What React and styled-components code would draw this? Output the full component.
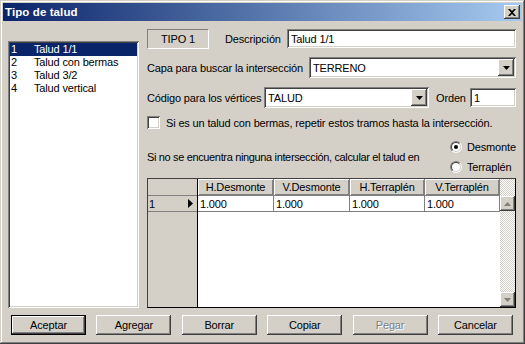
import React from 'react';
import styled, { createGlobalStyle, css } from 'styled-components';

const Global = createGlobalStyle`
  html, body { margin: 0; padding: 0; background: #d4d0c8; }
  body {
    font-family: "Liberation Sans", Arial, sans-serif;
    font-size: 11px;
    letter-spacing: -0.15px;
    color: #000;
  }
  * { box-sizing: border-box; }
`;

const raised = css`
  box-shadow: inset -1px -1px #404040, inset 1px 1px #fff, inset -2px -2px #808080, inset 2px 2px #d4d0c8;
`;
const sunken = css`
  box-shadow: inset 1px 1px #808080, inset -1px -1px #fff, inset 2px 2px #404040, inset -2px -2px #d4d0c8;
`;

const Window = styled.div`
  width: 525px;
  height: 344px;
  padding: 3px;
  background: #d4d0c8;
  box-shadow: inset -1px -1px #404040, inset 1px 1px #d4d0c8, inset -2px -2px #808080, inset 2px 2px #fff;
  display: flex;
  flex-direction: column;
`;

const TitleBar = styled.div`
  height: 18px;
  flex: none;
  display: flex;
  align-items: center;
  justify-content: space-between;
  padding: 0 2px;
  background: linear-gradient(to right, #0a246a, #a6caf0);
  color: #fff;
  font-weight: bold;
  font-size: 11.5px;
  letter-spacing: 0.1px;
`;

const CloseButton = styled.div`
  width: 16px;
  height: 14px;
  background: #d4d0c8;
  ${raised};
  display: flex;
  align-items: center;
  justify-content: center;
`;

const Body = styled.div`
  flex: 1;
  display: flex;
  flex-direction: column;
  padding: 8px 6px 0 5px;
`;

const Main = styled.div`
  display: flex;
  gap: 8px;
  height: 279px;
`;

const ListBox = styled.div`
  margin-top: 12px;
  width: 131px;
  height: 267px;
  background: #fff;
  ${sunken};
  padding: 2px;
`;

const ListItem = styled.div`
  height: 13px;
  line-height: 13px;
  display: grid;
  grid-template-columns: 23px 1fr;
  padding-left: 1px;
  background: ${p => (p.$selected ? '#0a246a' : 'transparent')};
  color: ${p => (p.$selected ? '#fff' : '#000')};
  white-space: nowrap;
`;

const RightPanel = styled.div`
  width: 369px;
  display: flex;
  flex-direction: column;
`;

const Row = styled.div`
  display: flex;
  align-items: center;
  height: ${p => p.$h}px;
  margin-top: ${p => p.$mt || 0}px;
  justify-content: ${p => p.$justify || 'flex-start'};
`;

const TipoBox = styled.div`
  width: 62px;
  height: 20px;
  border: 1px solid;
  border-color: #808080 #fff #fff #808080;
  display: flex;
  align-items: center;
  justify-content: center;
`;

const Label = styled.span`
  white-space: nowrap;
  margin-left: ${p => p.$ml || 0}px;
  letter-spacing: ${p => (p.$tight ? '-0.35px' : 'inherit')};
`;

const TextInput = styled.div`
  width: ${p => p.$w}px;
  height: 19px;
  margin-left: auto;
  align-self: ${p => (p.$top ? 'flex-start' : 'center')};
  background: #fff;
  ${sunken};
  padding: 0 4px;
  display: flex;
  align-items: center;
`;

const ComboBox = styled.div`
  width: ${p => p.$w}px;
  height: 21px;
  margin-left: auto;
  background: #fff;
  ${sunken};
  padding: 2px;
  display: flex;
  align-items: stretch;
`;

const ComboText = styled.div`
  flex: 1;
  display: flex;
  align-items: center;
  padding-left: 2px;
`;

const ComboButton = styled.div`
  width: 16px;
  background: #d4d0c8;
  ${raised};
  display: flex;
  align-items: center;
  justify-content: center;
`;

const OrdenGroup = styled.div`
  flex: 0 0 87px;
  display: flex;
  align-items: center;
  justify-content: space-between;
  padding-left: 7px;
`;

const CheckBox = styled.div`
  width: 13px;
  height: 13px;
  flex: none;
  background: #fff;
  ${sunken};
`;

const CheckRow = styled(Row)`
  gap: 6px;
`;

const RadioGroup = styled.div`
  width: 66px;
  display: flex;
  flex-direction: column;
  gap: 4px;
`;

const RadioOption = styled.div`
  height: 16px;
  display: flex;
  align-items: center;
  gap: 5px;
`;

const RadioOuter = styled.div`
  width: 12px;
  height: 12px;
  flex: none;
  border-radius: 50%;
  border: 1px solid;
  border-color: #808080 #fff #fff #808080;
`;

const RadioInner = styled.div`
  width: 10px;
  height: 10px;
  border-radius: 50%;
  border: 1px solid;
  border-color: #404040 #d4d0c8 #d4d0c8 #404040;
  background: #fff;
  display: flex;
  align-items: center;
  justify-content: center;
  &::after {
    content: '';
    width: 4px;
    height: 4px;
    border-radius: 50%;
    background: ${p => (p.$checked ? '#000' : 'transparent')};
  }
`;

const GridBox = styled.div`
  margin-top: 3px;
  height: 130px;
  border: 1px solid;
  border-color: #404040 #000 #000 #404040;
  display: flex;
  background: #fff;
`;

const FixedCol = styled.div`
  width: 50px;
  background: #d4d0c8;
  border-right: 1px solid #000;
  display: flex;
  flex-direction: column;
`;

const CornerCell = styled.div`
  height: 17px;
  border-bottom: 1px solid #808080;
`;

const RowHeadCell = styled.div`
  height: 16px;
  border-bottom: 1px solid #808080;
  display: flex;
  align-items: center;
  justify-content: space-between;
  padding: 0 4px 0 1px;
`;

const DataArea = styled.div`
  flex: 1;
  display: flex;
  flex-direction: column;
`;

const GridRow = styled.div`
  display: flex;
  height: ${p => p.$h}px;
`;

const HeadCell = styled.div`
  width: ${p => p.$w}px;
  background: #d4d0c8;
  border-right: 1px solid #808080;
  border-bottom: 1px solid #808080;
  box-shadow: inset 1px 1px #fff, inset -1px -1px #808080;
  display: flex;
  align-items: center;
  justify-content: center;
`;

const DataCell = styled.div`
  width: ${p => p.$w}px;
  border-right: 1px solid #808080;
  border-bottom: 1px solid #808080;
  display: flex;
  align-items: center;
  padding-left: 2px;
`;

const ScrollBar = styled.div`
  width: 15px;
  display: flex;
  flex-direction: column;
  background: repeating-conic-gradient(#d4d0c8 0 25%, #fff 0 50%) 0 0 / 2px 2px;
`;

const ScrollSpacer = styled.div`
  height: ${p => p.$h}px;
  flex: ${p => (p.$fill ? 1 : 'none')};
`;

const ScrollButton = styled.div`
  height: 15px;
  background: #d4d0c8;
  ${raised};
  display: flex;
  align-items: center;
  justify-content: center;
`;

const ButtonRow = styled.div`
  margin-top: 7px;
  display: flex;
  justify-content: space-between;
  padding: 0 3px;
`;

const Button = styled.div`
  width: 75px;
  height: 20px;
  background: #d4d0c8;
  display: flex;
  align-items: center;
  justify-content: center;
  ${raised};
  ${p => p.$default && css`
    border: 1px solid #000;
    box-shadow: inset -1px -1px #404040, inset 1px 1px #fff, inset -2px -2px #808080;
  `}
  color: ${p => (p.$disabled ? '#808080' : '#000')};
  text-shadow: ${p => (p.$disabled ? '1px 1px #fff' : 'none')};
`;

const DownArrow = ({ color = '#000' }) => (
  <svg width="7" height="4" viewBox="0 0 7 4"><path d="M0 0h7L3.5 4z" fill={color} /></svg>
);
const UpArrow = ({ color = '#000' }) => (
  <svg width="7" height="4" viewBox="0 0 7 4"><path d="M0 4h7L3.5 0z" fill={color} /></svg>
);

const Combo = ({ w, value }) => (
  <ComboBox $w={w}>
    <ComboText>{value}</ComboText>
    <ComboButton><DownArrow /></ComboButton>
  </ComboBox>
);

const Radio = ({ checked, label }) => (
  <RadioOption>
    <RadioOuter><RadioInner $checked={checked} /></RadioOuter>
    <span>{label}</span>
  </RadioOption>
);

const items = [
  ['1', 'Talud 1/1'],
  ['2', 'Talud con bermas'],
  ['3', 'Talud 3/2'],
  ['4', 'Talud vertical'],
];

const cols = [
  ['H.Desmonte', 76],
  ['V.Desmonte', 76],
  ['H.Terraplén', 75],
  ['V.Terraplén', 75],
];

export default function App() {
  return (
    <>
      <Global />
      <Window>
        <TitleBar>
          <span>Tipo de talud</span>
          <CloseButton>
            <svg width="8" height="7" viewBox="0 0 8 7">
              <path d="M0 0h2l2 2 2-2h2L5 3.5 8 7H6L4 5 2 7H0l3-3.5z" fill="#000" />
            </svg>
          </CloseButton>
        </TitleBar>
        <Body>
          <Main>
            <ListBox>
              {items.map(([n, t], i) => (
                <ListItem key={n} $selected={i === 0}>
                  <span>{n}</span>
                  <span>{t}</span>
                </ListItem>
              ))}
            </ListBox>
            <RightPanel>
              <Row $h={20}>
                <TipoBox>TIPO 1</TipoBox>
                <Label $ml={16}>Descripción</Label>
                <TextInput $w={229} $top>Talud 1/1</TextInput>
              </Row>
              <Row $h={21} $mt={8}>
                <Label>Capa para buscar la intersección</Label>
                <Combo w={207} value="TERRENO" />
              </Row>
              <Row $h={21} $mt={9}>
                <Label>Código para los vértices</Label>
                <Combo w={165} value="TALUD" />
                <OrdenGroup>
                  <Label>Orden</Label>
                  <TextInput $w={46}>1</TextInput>
                </OrdenGroup>
              </Row>
              <CheckRow $h={13} $mt={8}>
                <CheckBox />
                <Label>Si es un talud con bermas, repetir estos tramos hasta la intersección.</Label>
              </CheckRow>
              <Row $h={36} $mt={10} $justify="space-between">
                <Label $tight>Si no se encuentra ninguna intersección, calcular el talud en</Label>
                <RadioGroup>
                  <Radio checked label="Desmonte" />
                  <Radio label="Terraplén" />
                </RadioGroup>
              </Row>
              <GridBox>
                <FixedCol>
                  <CornerCell />
                  <RowHeadCell>
                    <span>1</span>
                    <svg width="5" height="9" viewBox="0 0 5 9"><path d="M0 0l5 4.5L0 9z" fill="#000" /></svg>
                  </RowHeadCell>
                </FixedCol>
                <DataArea>
                  <GridRow $h={17}>
                    {cols.map(([c, w]) => <HeadCell key={c} $w={w}>{c}</HeadCell>)}
                  </GridRow>
                  <GridRow $h={16}>
                    {cols.map(([c, w]) => <DataCell key={c} $w={w}>1.000</DataCell>)}
                  </GridRow>
                </DataArea>
                <ScrollBar>
                  <ScrollSpacer $h={17} />
                  <ScrollButton><UpArrow color="#808080" /></ScrollButton>
                  <ScrollSpacer $fill />
                  <ScrollButton><DownArrow color="#808080" /></ScrollButton>
                </ScrollBar>
              </GridBox>
            </RightPanel>
          </Main>
          <ButtonRow>
            <Button $default>Aceptar</Button>
            <Button>Agregar</Button>
            <Button>Borrar</Button>
            <Button>Copiar</Button>
            <Button $disabled>Pegar</Button>
            <Button>Cancelar</Button>
          </ButtonRow>
        </Body>
      </Window>
    </>
  );
}
